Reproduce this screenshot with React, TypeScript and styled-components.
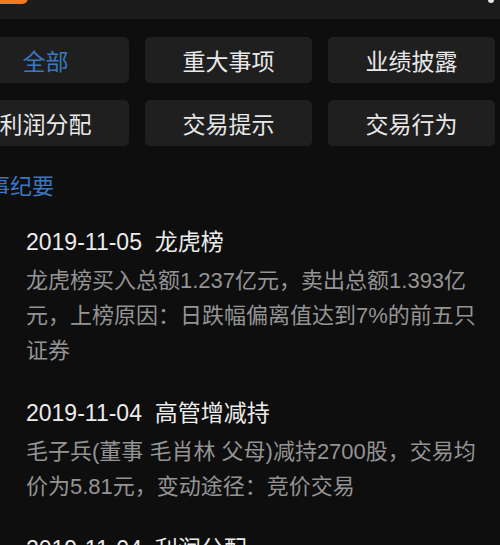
import styled, { createGlobalStyle } from 'styled-components'

const GlobalStyle = createGlobalStyle`
    html, body {
        margin: 0;
        padding: 0;
        background: #0e0e0e;
        font-family: "Liberation Sans", "Noto Sans CJK SC", sans-serif;
        overflow: hidden;
    }
`

const categorias = ['全部', '重大事项', '业绩披露', '利润分配', '交易提示', '交易行为']

const eventos = [
    {
        data: '2019-11-05',
        tipo: '龙虎榜',
        linhas: ['龙虎榜买入总额1.237亿元，卖出总额1.393亿', '元，上榜原因：日跌幅偏离值达到7%的前五只', '证券'],
    },
    {
        data: '2019-11-04',
        tipo: '高管增减持',
        linhas: ['毛子兵(董事 毛肖林 父母)减持2700股，交易均', '价为5.81元，变动途径：竞价交易'],
    },
    {
        data: '2019-11-04',
        tipo: '利润分配',
        linhas: ['2019年半年度利润分配方案'],
    },
]

const App = () => {
    return (<Page>
        <GlobalStyle />
        <TopBar>
            <OrangeTab />
            <Dot />
        </TopBar>
        <Grid>
            {categorias.map((c, i) => (
                <Chip key={c} $ativo={i === 0}>{c}</Chip>
            ))}
        </Grid>
        <SectionTitle>大事纪要</SectionTitle>
        <List>
            {eventos.map((e, i) => (
                <Item key={i}>
                    <ItemTitle>{e.data}&nbsp;&nbsp;{e.tipo}</ItemTitle>
                    <ItemDesc>
                        {e.linhas.map((l, j) => <Line key={j}>{l}</Line>)}
                    </ItemDesc>
                </Item>
            ))}
        </List>
    </Page>)
}

const Page = styled.div`
    width: 500px;
    height: 545px;
    overflow: hidden;
    background: #0e0e0e;
`

const TopBar = styled.div`
    position: relative;
    height: 19px;
    background: #1c1c1c;
`

const OrangeTab = styled.div`
    position: absolute;
    left: -10px;
    top: -20px;
    width: 38px;
    height: 24px;
    background: #f27b1f;
    border-radius: 0 0 6px 0;
`

const Dot = styled.div`
    position: absolute;
    right: 6px;
    top: -3px;
    width: 6px;
    height: 6px;
    border-radius: 50%;
    background: #e6e6e6;
`

const Grid = styled.div`
    display: grid;
    grid-template-columns: repeat(3, 167px);
    grid-auto-rows: 46px;
    column-gap: 16px;
    row-gap: 17px;
    margin: 18px 0 0 -38px;
`

const Chip = styled.div<{ $ativo: boolean }>`
    display: flex;
    align-items: center;
    justify-content: center;
    background: #1f1f1f;
    border-radius: 5px;
    font-size: 23px;
    color: ${({ $ativo }) => ($ativo ? '#3a78c2' : '#e8e8e8')};
`

const SectionTitle = styled.div`
    margin: 26px 0 0 -34px;
    font-size: 22px;
    line-height: 30px;
    color: #3a78c2;
`

const List = styled.div`
    display: flex;
    flex-direction: column;
    gap: 27px;
    margin-top: 22px;
    padding-left: 26px;
`

const Item = styled.div`
    display: flex;
    flex-direction: column;
    gap: 3px;
`

const ItemTitle = styled.div`
    font-size: 23px;
    line-height: 36px;
    color: #ececec;
    white-space: nowrap;
`

const ItemDesc = styled.div`
    font-size: 22px;
    line-height: 35px;
    color: #949494;
`

const Line = styled.div`
    white-space: nowrap;
`

export default App
